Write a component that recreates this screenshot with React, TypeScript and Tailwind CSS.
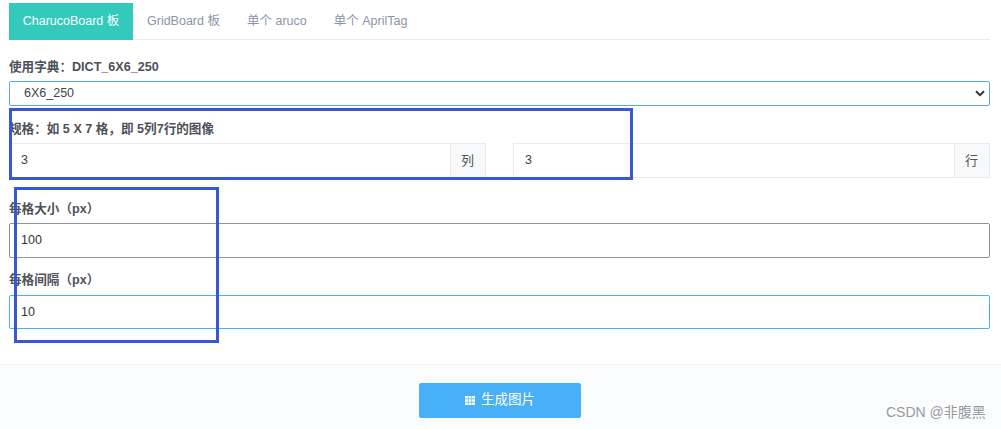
const font = "font-['Liberation_Sans','Noto_Sans_CJK_SC',sans-serif]";

const tabs = ["CharucoBoard 板", "GridBoard 板", "单个 aruco", "单个 AprilTag"];

function Field({ value, unit }: { value: string; unit: string }) {
  return (
    <div className="flex h-[35px] flex-1 border border-[#e9ebee] bg-white">
      <div className="flex flex-1 items-center pl-[11px] text-[12.5px] text-[#444]">{value}</div>
      <div className="flex w-[35px] items-center justify-center border-l border-[#e9ebee] bg-[#f8f9fa] pr-[1px] text-[13px] text-[#555]">
        {unit}
      </div>
    </div>
  );
}

export default function App() {
  return (
    <div className={`${font} relative flex h-[429px] w-[1001px] flex-col overflow-hidden bg-white`}>
      <div className="flex-1 pr-[11px] pl-[9px] pt-[3px]">
        <div className="flex h-[37px] border-b border-[#e9ebee] text-[12.5px]">
          {tabs.map((tab, i) => (
            <div
              key={tab}
              className={
                i === 0
                  ? "flex h-[37px] w-[124px] items-center justify-center bg-[#33cabb] text-white"
                  : "flex items-center pr-[13px] pl-[14px] text-[#8b95a5]"
              }
            >
              {tab}
            </div>
          ))}
        </div>

        <div className="mt-[19px] text-[12.6px] leading-[16px] font-semibold text-[#4d5259]">使用字典：DICT_6X6_250</div>
        <div className="mt-[6px] flex h-[25px] items-center justify-between rounded-[2px] border border-[#5aa9e6] pr-[4px] pl-[14px] text-[12.5px] text-[#444]">
          <span>6X6_250</span>
          <svg width="10" height="7" viewBox="0 0 10 7" fill="none" stroke="#333" strokeWidth="2">
            <path d="M1 1.2 5 5.2 9 1.2" />
          </svg>
        </div>

        <div className="mt-[15px] text-[12.6px] leading-[16px] font-semibold text-[#4d5259]">规格：如 5 X 7 格，即 5列7行的图像</div>
        <div className="mt-[6px] flex gap-[27px]">
          <Field value="3" unit="列" />
          <Field value="3" unit="行" />
        </div>

        <div className="mt-[23px] text-[12.6px] leading-[16px] font-semibold text-[#4d5259]">每格大小（px）</div>
        <div className="mt-[6px] flex h-[35px] items-center rounded-[2px] border border-[#8f9397] pl-[11px] text-[12.5px] text-[#333]">
          100
        </div>

        <div className="mt-[14px] text-[12.6px] leading-[16px] font-semibold text-[#4d5259]">每格间隔（px）</div>
        <div className="mt-[7px] flex h-[34px] items-center rounded-[2px] border border-[#48b0f7] pl-[11px] text-[12.5px] text-[#333]">
          10
        </div>
      </div>

      <div className="flex h-[65px] justify-center border-t border-[#f1f2f3] bg-[#fbfcfe] pt-[18px] pr-[1px]">
        <div className="flex h-[35px] w-[162px] items-center justify-center gap-[6px] rounded-[2px] bg-[#48b0f7] text-[13.5px] text-white">
          <svg width="10" height="9" viewBox="0 0 10 9" fill="white">
            <path d="M0 0h3v2.4H0zM3.5 0h3v2.4h-3zM7 0h3v2.4H7zM0 3.3h3v2.4H0zM3.5 3.3h3v2.4h-3zM7 3.3h3v2.4H7zM0 6.6h3V9H0zM3.5 6.6h3V9h-3zM7 6.6h3V9H7z" />
          </svg>
          <span>生成图片</span>
        </div>
      </div>

      {/* Annotation boxes and watermark sit on top of the form */}
      <div className="absolute top-[108px] left-[9px] h-[72px] w-[624px] border-[3px] border-[#3657d6]" />
      <div className="absolute top-[187px] left-[14px] h-[156px] w-[205px] border-[3px] border-[#3657d6]" />
      <div className="absolute top-[403px] left-[886px] text-[14px] leading-[18px] text-[#9a9a9a]">CSDN @非腹黑</div>
    </div>
  );
}
